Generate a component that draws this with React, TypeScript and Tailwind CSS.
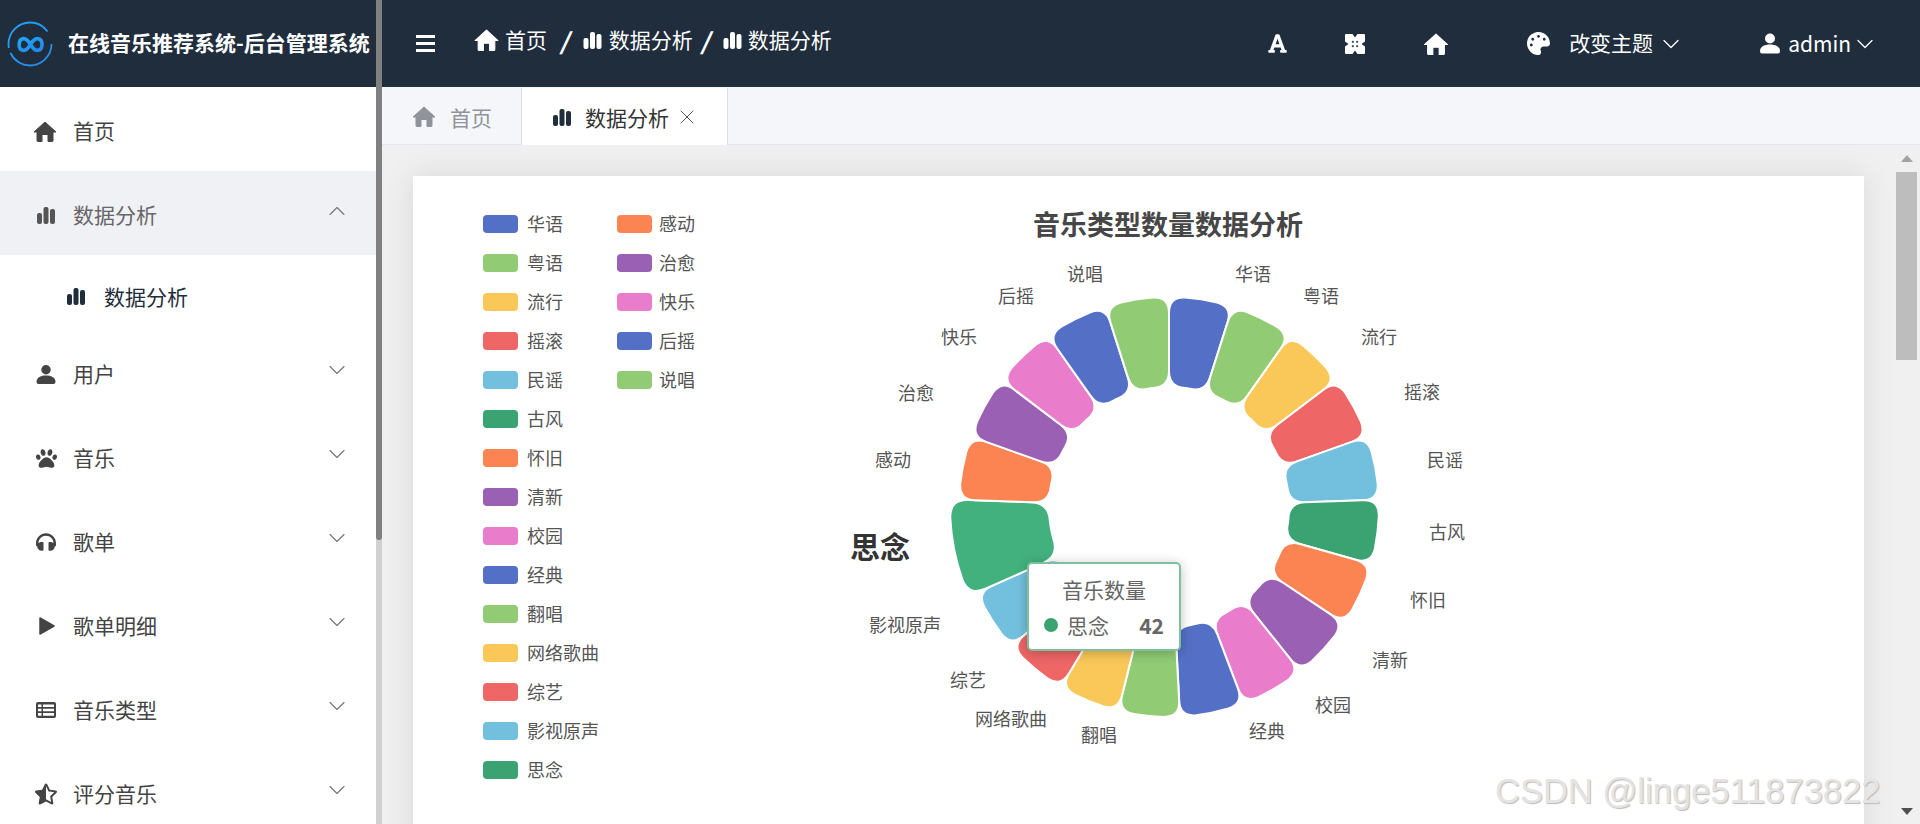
import { ChevronDown, ChevronUp, X } from "lucide-react";
import { FaFont, FaHeadphones, FaPalette, FaPaw, FaStarHalfAlt } from "react-icons/fa";

const colors = ["#5470c6", "#91cc75", "#fac858", "#ee6666", "#73c0de", "#3ba272", "#fc8452", "#9a60b4", "#ea7ccc"];

const names = [
  "华语", "粤语", "流行", "摇滚", "民谣", "古风", "怀旧", "清新", "校园", "经典",
  "翻唱", "网络歌曲", "综艺", "影视原声", "思念", "感动", "治愈", "快乐", "后摇", "说唱",
];

// where each slice ends, clockwise from the top
const ends = [17.6, 35.2, 52.8, 70.4, 88, 105.8, 123.6, 141.4, 159.2, 177, 194, 211, 228.5, 246, 272, 289.6, 307.2, 324.8, 342.4, 360];

// label centres, in the chart's own coordinates
const labels: [string, number, number][] = [
  ["华语", 1253, 273], ["粤语", 1321, 295], ["流行", 1379, 336], ["摇滚", 1422, 391], ["民谣", 1445, 459],
  ["古风", 1447, 531], ["怀旧", 1428, 599], ["清新", 1390, 659], ["校园", 1333, 704], ["经典", 1267, 730],
  ["翻唱", 1099, 734], ["网络歌曲", 1011, 718], ["综艺", 968, 679], ["影视原声", 905, 624],
  ["感动", 893, 459], ["治愈", 916, 392], ["快乐", 959, 336], ["后摇", 1016, 295], ["说唱", 1085, 273],
];

const CX = 1169;
const CY = 507;

function point(r: number, deg: number) {
  const a = ((deg - 90) * Math.PI) / 180;
  return `${(CX + r * Math.cos(a)).toFixed(2)} ${(CY + r * Math.sin(a)).toFixed(2)}`;
}

// annular sector with rounded corners
function sector(r0: number, r1: number, a0: number, a1: number, c: number) {
  const d1 = ((c / r1) * 180) / Math.PI;
  const d0 = ((c / r0) * 180) / Math.PI;
  return [
    `M${point(r1, a0 + d1)}`,
    `A${r1} ${r1} 0 0 1 ${point(r1, a1 - d1)}`,
    `Q${point(r1, a1)} ${point(r1 - c, a1)}`,
    `L${point(r0 + c, a1)}`,
    `Q${point(r0, a1)} ${point(r0, a1 - d0)}`,
    `A${r0} ${r0} 0 0 0 ${point(r0, a0 + d0)}`,
    `Q${point(r0, a0)} ${point(r0 + c, a0)}`,
    `L${point(r1 - c, a0)}`,
    `Q${point(r1, a0)} ${point(r1, a0 + d1)}`,
    "Z",
  ].join(" ");
}

function BarsIcon({ className }: { className?: string }) {
  return (
    <svg viewBox="0 0 18 17" fill="currentColor" className={className}>
      <rect x="0" y="6" width="5" height="11" rx="2" />
      <rect x="6.5" y="0" width="5" height="17" rx="2" />
      <rect x="13" y="2" width="5" height="15" rx="2" />
    </svg>
  );
}

function HomeIcon({ className }: { className?: string }) {
  return (
    <svg viewBox="0 0 24 21" fill="currentColor" className={className}>
      <path
        d="M12 1 23 11H20V19.5Q20 20.5 19 20.5H15V13.500H9V20.5H5Q4 20.5 4 19.5V11H1Z"
        stroke="currentColor"
        strokeWidth="1"
        strokeLinejoin="round"
      />
    </svg>
  );
}

function PlayIcon({ className }: { className?: string }) {
  return (
    <svg viewBox="0 0 16 18" fill="currentColor" className={className}>
      <path d="M1 1 15 9 1 17Z" stroke="currentColor" strokeWidth="1.5" strokeLinejoin="round" />
    </svg>
  );
}

function UserIcon({ className }: { className?: string }) {
  return (
    <svg viewBox="0 0 20 20" fill="currentColor" className={className}>
      <circle cx="10" cy="5" r="5" />
      <path d="M0 17.500C0 13 5 11 10 11S20 13 20 17.500Q20 20 18 20H2Q0 20 0 17.500Z" />
    </svg>
  );
}

function TableIcon({ className }: { className?: string }) {
  return (
    <svg viewBox="0 0 20 16" className={className}>
      <rect width="20" height="16" rx="2" fill="currentColor" />
      <path
        d="M2 2.500H5.500V5H2ZM7 2.500H18V5H7ZM2 6.800H5.500V9.300H2ZM7 6.800H18V9.300H7ZM2 11H5.500V13.800H2ZM7 11H18V13.800H7Z"
        fill="#fff"
      />
    </svg>
  );
}

function FullIcon({ className }: { className?: string }) {
  return (
    <svg viewBox="0 0 20 20" className={className}>
      <rect width="20" height="20" rx="1" fill="currentColor" />
      <path d="M7.500 0H12.500L10 3.500ZM7.500 20H12.500L10 16.500ZM0 7.500V12.500L3.500 10ZM20 7.500V12.500L16.500 10Z" fill="#1f2d3d" />
      <path d="M6.500 8 8 6.500 9 8 8 9ZM13.500 8 12 6.500 11 8 12 9ZM6.500 12 8 13.500 9 12 8 11ZM13.500 12 12 13.500 11 12 12 11Z" fill="#1f2d3d" />
    </svg>
  );
}

function Logo() {
  return (
    <svg viewBox="0 0 46 46" className="w-[46px] h-[46px] shrink-0" fill="none">
      <defs>
        <linearGradient id="logo" x1="0" y1="0" x2="1" y2="1">
          <stop offset="0" stopColor="#1fa6f5" />
          <stop offset="1" stopColor="#2488ea" />
        </linearGradient>
      </defs>
      <circle cx="23" cy="23" r="21.5" stroke="url(#logo)" strokeWidth="1.8" strokeDasharray="58 5 58 14" />
      <path
        d="M23.500 23.500C20.500 18.500 17.500 17 15 18 11.500 19 11 28 15 29 17.500 30 20.500 28.500 23.500 23.500 26.500 18.500 29.500 17 32 18 36 19 36 28 32 29 29.500 30 26.500 28.500 23.500 23.500Z"
        stroke="url(#logo)"
        strokeWidth="3.6"
      />
    </svg>
  );
}

function SideItem({ icon, label, open, active }: { icon: React.ReactNode; label: string; open?: boolean; active?: boolean }) {
  return (
    <div className={`h-[84px] shrink-0 flex items-center pl-[35px] pr-[25px] pt-1 text-[21px] ${active ? "bg-[#f0f1f5] text-[#666]" : "text-[#444]"}`}>
      <span className="w-[22px] flex justify-center mr-[16px]">{icon}</span>
      <span className="flex-1">{label}</span>
      {open ? (
        <ChevronUp size={28} strokeWidth={1} className="text-[#777] mb-2" />
      ) : (
        <ChevronDown size={28} strokeWidth={1} className="text-[#777] mb-2" />
      )}
    </div>
  );
}

function Sidebar() {
  const icon = "text-[#444]";
  return (
    <aside className="w-[376px] shrink-0 flex flex-col overflow-hidden bg-white">
      <div className="h-[87px] shrink-0 bg-[#1f2d3d] flex items-center pl-[7px] gap-[15px]">
        <Logo />
        <span className="text-white text-[21px] font-bold whitespace-nowrap mb-[2px]">在线音乐推荐系统-后台管理系统</span>
      </div>
      <div className="h-[84px] shrink-0 flex items-center pl-[33px] pt-1 text-[21px] text-[#444]">
        <HomeIcon className="w-[24px] h-[21px] text-[#444] mr-[16px]" />
        <span>首页</span>
      </div>
      <SideItem active open label="数据分析" icon={<BarsIcon className="w-[18px] h-[17px] text-[#555]" />} />
      <div className="h-[75px] shrink-0 flex items-center pl-[67px] pt-[8px] text-[21px] text-[#1f2d3d]">
        <BarsIcon className="w-[18px] h-[17px] mr-[19px]" />
        <span>数据分析</span>
      </div>
      <SideItem label="用户" icon={<UserIcon className="w-[20px] h-[19px] text-[#444]" />} />
      <SideItem label="音乐" icon={<FaPaw size={21} className={icon} />} />
      <SideItem label="歌单" icon={<FaHeadphones size={20} className={icon} />} />
      <SideItem label="歌单明细" icon={<PlayIcon className="w-[16px] h-[18px] text-[#444] ml-[1px]" />} />
      <SideItem label="音乐类型" icon={<TableIcon className="w-[20px] h-[16px] text-[#444]" />} />
      <SideItem label="评分音乐" icon={<FaStarHalfAlt size={22} className={icon} />} />
    </aside>
  );
}

function Header() {
  return (
    <header className="h-[87px] shrink-0 bg-[#1f2d3d] text-white flex items-center text-[21px]">
      <div className="w-[19px] ml-[34px] flex flex-col gap-[4px]">
        <div className="h-[3px] bg-white" />
        <div className="h-[3px] bg-white" />
        <div className="h-[3px] bg-white" />
      </div>
      <div className="ml-[39px] flex items-center mb-[7px]">
        <HomeIcon className="w-[25px] h-[22px] mr-[6px]" />
        <span>首页</span>
        <span className="ml-[13px] mr-[14px] text-[23px] font-black italic">/</span>
        <BarsIcon className="w-[19px] h-[17px] mr-[7px]" />
        <span>数据分析</span>
        <span className="ml-[8px] mr-[13px] text-[23px] font-black italic">/</span>
        <BarsIcon className="w-[19px] h-[17px] mr-[6px]" />
        <span>数据分析</span>
      </div>
      <div className="flex-1" />
      <FaFont size={21} className="mr-[57px]" />
      <FullIcon className="w-[20px] h-[20px] mr-[58px]" />
      <HomeIcon className="w-[26px] h-[22px] mr-[78px]" />
      <FaPalette size={23} className="mr-[19px]" />
      <span className="mb-[2px]">改变主题</span>
      <ChevronDown size={28} strokeWidth={1.1} className="ml-[4px] mr-[75px]" />
      <UserIcon className="w-[20px] h-[21px] mr-[8px]" />
      <span>admin</span>
      <ChevronDown size={28} strokeWidth={1.1} className="mr-[41px]" />
    </header>
  );
}

function Tabs() {
  return (
    <div className="h-[58px] shrink-0 bg-[#f4f6fa] border-b border-[#e4e7ed] flex text-[21px]">
      <div className="w-[139px] flex items-center pl-[30px] pt-[2px] text-[#909399]">
        <HomeIcon className="w-[24px] h-[21px] mr-[14px]" />
        <span className="mt-[2px]">首页</span>
      </div>
      <div className="w-[207px] h-[60px] bg-white border-x border-[#dcdfe6] border-b-[3px] border-b-[#1f2d3d] flex items-center pl-[31px] pt-[1px] text-[#333] mt-[1px]">
        <BarsIcon className="w-[18px] h-[17px] text-[#1f2d3d] mr-[14px]" />
        <span className="mt-[2px]">数据分析</span>
        <X size={24} strokeWidth={1} className="ml-[6px] text-[#555]" />
      </div>
    </div>
  );
}

function Legend() {
  return (
    <div className="ml-[70px] mt-[28px] w-[268px] grid grid-flow-col grid-cols-2 grid-rows-[repeat(15,39px)] justify-start h-fit text-[18px] text-[#555]">
      {names.map((n, i) => (
        <div key={n} className="flex items-center w-[133px]">
          <span
            className={`w-[35px] h-[18px] rounded-[4px] shrink-0 ${i < 15 ? "mr-[9px]" : "mr-[7px]"}`}
            style={{ background: colors[i % colors.length] }}
          />
          <span className="whitespace-nowrap">{n}</span>
        </div>
      ))}
    </div>
  );
}

function Chart() {
  const slices = names.map((n, i) => {
    const big = n === "思念";
    const d = sector(big ? 120 : 120, big ? 219 : 210, i === 0 ? 0 : ends[i - 1], ends[i], big ? 18 : 16);
    return <path key={n} d={d} fill={big ? "#42b17e" : colors[i % colors.length]} stroke="#fff" strokeWidth="2" />;
  });
  return (
    <svg viewBox="800 176 740 648" className="w-[740px] h-[648px] shrink-0 ml-[49px]">
      <text x="1168" y="223" textAnchor="middle" dominantBaseline="central" fontSize="27" fontWeight="700" fill="#464646">
        音乐类型数量数据分析
      </text>
      {slices}
      {labels.map(([t, x, y]) => (
        <text key={t} x={x} y={y} textAnchor="middle" dominantBaseline="central" fontSize="18" fill="#555">
          {t}
        </text>
      ))}
      <text x="880" y="545" textAnchor="middle" dominantBaseline="central" fontSize="30" fontWeight="700" fill="#333">
        思念
      </text>
    </svg>
  );
}

function Tooltip() {
  return (
    <div className="absolute left-[614px] top-[386px] w-[154px] h-[89px] bg-white border-2 border-[#7fbf9f] rounded-[5px] shadow-[0_2px_12px_rgba(0,0,0,0.25)] px-[15px] pt-[10px] text-[21px] text-[#666]">
      <div className="text-center leading-[30px]">音乐数量</div>
      <div className="flex items-center mt-[7px] leading-[28px]">
        <span className="w-[14px] h-[14px] rounded-full bg-[#3ba272] mr-[9px]" />
        <span>思念</span>
        <span className="ml-auto font-bold">42</span>
      </div>
    </div>
  );
}

export default function App() {
  return (
    <div className="w-[1920px] h-[824px] overflow-hidden flex relative font-['Noto_Sans_CJK_SC',sans-serif]">
      <Sidebar />
      <div className="w-[6px] shrink-0 bg-[#d0d0d0]">
        <div className="h-[540px] bg-[#808080] rounded-b-[3px]" />
      </div>
      <div className="flex-1 flex flex-col min-w-0">
        <Header />
        <Tabs />
        <main className="flex-1 flex bg-[#f0f0f0] min-h-0">
          <div className="flex-1 pl-[31px] pt-[31px] min-w-0">
            <div className="relative w-[1451px] h-[680px] bg-white shadow-[0_0_30px_rgba(0,0,0,0.1)] flex">
              <Legend />
              <Chart />
              <Tooltip />
            </div>
          </div>
          <div className="w-[27px] shrink-0 flex flex-col items-center pt-[10px] pb-[9px]">
            <div className="w-0 h-0 border-x-[6px] border-x-transparent border-b-[7px] border-b-[#a3a3a3]" />
            <div className="w-[21px] h-[188px] bg-[#bdbdbd] mt-[10px]" />
            <div className="flex-1" />
            <div className="w-0 h-0 border-x-[6px] border-x-transparent border-t-[7px] border-t-[#505050]" />
          </div>
        </main>
      </div>
      <div className="absolute left-[1495px] top-[767px] text-[34.5px] leading-[48px] whitespace-nowrap text-[#e4e4e4] font-['Liberation_Sans',sans-serif] [text-shadow:1px_1px_1px_#bbb]">
        CSDN @linge511873822
      </div>
    </div>
  );
}
